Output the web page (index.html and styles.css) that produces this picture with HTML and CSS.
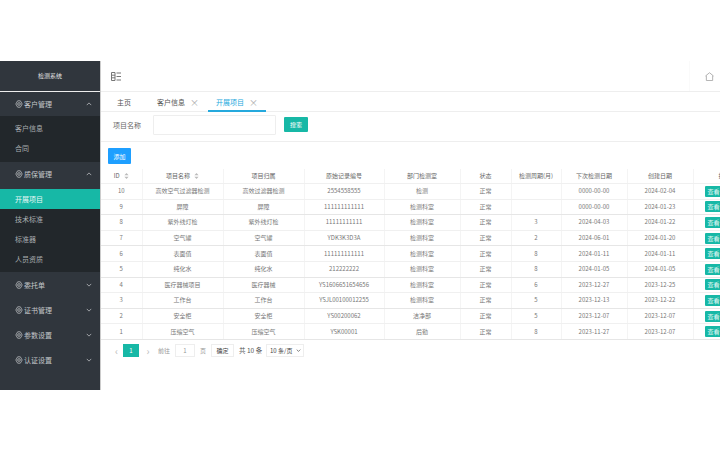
FILE: index.html
```html
<!DOCTYPE html>
<html lang="zh-CN">
<head>
    <meta charset="UTF-8">
    <meta name="viewport" content="width=device-width, initial-scale=1.0">
    <title>检测系统 - 开展项目</title>
    <link rel="stylesheet" href="styles.css">
</head>
<body>
    <svg class="svg-defs" width="0" height="0">
        <symbol id="gear" viewBox="0 0 12 12">
            <path d="M4 1.200h4l2.800 4.800-2.800 4.800H4L1.200 6z" fill="none" stroke="currentColor" stroke-width="1.100"/>
            <circle cx="6" cy="6" r="2" fill="none" stroke="currentColor" stroke-width="1.100"/>
        </symbol>
        <symbol id="up" viewBox="0 0 8 5">
            <path d="M1 4l3-3 3 3" fill="none" stroke="currentColor" stroke-width="1"/>
        </symbol>
        <symbol id="down" viewBox="0 0 8 5">
            <path d="M1 1l3 3 3-3" fill="none" stroke="currentColor" stroke-width="1"/>
        </symbol>
        <symbol id="sort" viewBox="0 0 6 7">
            <path d="M3 0l2.500 2.700h-5zM3 7L.5 4.300h5z" fill="currentColor"/>
        </symbol>
    </svg>

    <div class="app">
        <aside class="sidebar">
            <div class="logo">检测系统</div>
            <div class="menu-title menu-title-first">
                <span><svg class="menu-icon"><use href="#gear"/></svg>客户管理</span>
                <svg class="arrow"><use href="#up"/></svg>
            </div>
            <div class="submenu submenu-short">
                <a>客户信息</a>
                <a>合同</a>
            </div>
            <div class="menu-title menu-title-tall">
                <span><svg class="menu-icon"><use href="#gear"/></svg>质保管理</span>
                <svg class="arrow"><use href="#up"/></svg>
            </div>
            <div class="submenu submenu-long">
                <a class="active">开展项目</a>
                <a>技术标准</a>
                <a>标准器</a>
                <a>人员资质</a>
            </div>
            <div class="menu-title">
                <span><svg class="menu-icon"><use href="#gear"/></svg>委托单</span>
                <svg class="arrow"><use href="#down"/></svg>
            </div>
            <div class="menu-title">
                <span><svg class="menu-icon"><use href="#gear"/></svg>证书管理</span>
                <svg class="arrow"><use href="#down"/></svg>
            </div>
            <div class="menu-title">
                <span><svg class="menu-icon"><use href="#gear"/></svg>参数设置</span>
                <svg class="arrow"><use href="#down"/></svg>
            </div>
            <div class="menu-title">
                <span><svg class="menu-icon"><use href="#gear"/></svg>认证设置</span>
                <svg class="arrow"><use href="#down"/></svg>
            </div>
        </aside>

        <main class="content">
            <div class="topbar">
                <svg class="fold-icon" viewBox="0 0 10 9">
                    <path d="M.5.5h3.500v8H.5zM.5 3.200H4M.5 5.800H4M5.500 1H10M5.500 4.500H10M5.500 8H10" fill="none" stroke="#777" stroke-width="1"/>
                </svg>
                <div class="home-box">
                    <svg class="home-icon" viewBox="0 0 10 10">
                        <path d="M.5 4.500L5 .8l4.500 3.700M1.500 4v5.500h7V4" fill="none" stroke="#aaa" stroke-width="1"/>
                    </svg>
                </div>
            </div>

            <div class="tabs">
                <div class="tab tab-home">主页</div>
                <div class="tab tab-customer">客户信息<span class="tab-close">×</span></div>
                <div class="tab tab-active">开展项目<span class="tab-close">×</span></div>
            </div>

            <form class="search-form">
                <label class="search-label">项目名称</label>
                <input class="search-input" type="text">
                <button type="button" class="btn btn-green">搜索</button>
            </form>

            <div class="toolbar">
                <button type="button" class="btn btn-blue">添加</button>
            </div>

            <div class="table-wrap">
                <table class="data-table">
                    <colgroup>
                        <col class="c-id"><col class="c-name"><col class="c-owner"><col class="c-code">
                        <col class="c-dept"><col class="c-state"><col class="c-cycle"><col class="c-date">
                        <col class="c-date"><col class="c-op">
                    </colgroup>
                    <thead>
                        <tr>
                            <th>ID<svg class="sort"><use href="#sort"/></svg></th>
                            <th>项目名称<svg class="sort"><use href="#sort"/></svg></th>
                            <th>项目归属</th>
                            <th>原始记录编号</th>
                            <th>部门检测室</th>
                            <th>状态</th>
                            <th>检测周期(月)</th>
                            <th>下次检测日期</th>
                            <th>创建日期</th>
                            <th class="op-head">操作</th>
                        </tr>
                    </thead>
                    <tbody id="rows"></tbody>
                </table>
            </div>

            <div class="pager">
                <span class="pager-arrow">‹</span>
                <span class="pager-current">1</span>
                <span class="pager-arrow pager-next">›</span>
                <span class="pager-text">前往</span>
                <span class="pager-input">1</span>
                <span class="pager-text pager-unit">页</span>
                <span class="pager-ok">确定</span>
                <span class="pager-total">共 10 条</span>
                <div class="pager-size-box">
                    <select class="pager-size"><option>10 条/页</option></select>
                    <svg class="pager-size-arrow"><use href="#down"/></svg>
                </div>
            </div>
        </main>
    </div>

    <script src="script.js"></script>
</body>
</html>
```

FILE: styles.css
```css
body {
    margin: 0;
    font-family: "Noto Sans CJK SC", "Liberation Sans", sans-serif;
    font-size: 7px;
    color: #666;
    background-color: #fff;
    overflow: hidden;
}

.svg-defs {
    display: block;
}

.app {
    display: flex;
    height: 329px;
    margin-top: 61px;
}

/* sidebar */
.sidebar {
    flex: 0 0 100px;
    background-color: #30363d;
    border-right: 1px solid #ccc;
    color: #c4c7ca;
    font-size: 7px;
}

.logo {
    height: 30px;
    line-height: 30px;
    text-align: center;
    font-size: 6px;
    color: #e4e4e4;
    border-bottom: 1px solid #eee;
}

.menu-title {
    display: flex;
    justify-content: space-between;
    align-items: center;
    height: 25px;
    padding: 0 8px 0 15px;
}

.menu-title-first {
    height: 24px;
}

.menu-title-tall {
    height: 24px;
    padding-bottom: 3px;
}

.menu-title span {
    display: flex;
    align-items: center;
    gap: 1px;
}

.menu-icon {
    width: 8px;
    height: 8px;
}

.arrow {
    width: 6px;
    height: 4px;
}

.submenu {
    background-color: #22272b;
}

.submenu a {
    display: block;
    height: 20px;
    line-height: 20px;
    padding-left: 15px;
    color: #a9adb0;
}

.submenu-short {
    padding: 2px 0 4px;
}

.submenu-long {
    padding-bottom: 3px;
}

.submenu .active {
    background-color: #17b8a6;
    color: #e8f8f6;
}

/* top bar and tabs */
.content {
    flex: 1;
    min-width: 0;
}

.topbar {
    display: flex;
    justify-content: space-between;
    align-items: center;
    height: 30px;
    padding-left: 10px;
    border-bottom: 1px solid #eee;
}

.fold-icon {
    width: 10px;
    height: 9px;
}

.home-box {
    display: flex;
    align-items: center;
    justify-content: flex-end;
    width: 31px;
    height: 100%;
    padding-right: 6px;
    box-sizing: border-box;
    border-left: 1px solid #fafafa;
}

.home-icon {
    width: 9px;
    height: 9px;
}

.tabs {
    display: flex;
    height: 19px;
    border-bottom: 1px solid #eee;
}

.tab {
    display: flex;
    align-items: center;
    height: 20px;
    color: #555;
}

.tab-home {
    width: 15px;
    padding: 0 15px 0 16px;
}

.tab-customer {
    padding: 0 9px 0 10px;
}

.tab-close {
    margin-left: 5px;
    font-size: 9px;
    color: #aaa;
}

.tab-active {
    padding: 0 8px;
    color: #25a9dd;
    box-shadow: inset 0 -2px 0 #25a9dd;
}

/* search and toolbar */
.search-form {
    display: flex;
    align-items: center;
    height: 30px;
    padding: 0 0 4px 12px;
    box-sizing: border-box;
    border-bottom: 1px solid #eee;
}

.search-label {
    width: 40px;
}

.search-input {
    width: 123px;
    height: 20px;
    padding: 0;
    box-sizing: border-box;
    border: 1px solid #eee;
    border-radius: 1px;
}

.btn {
    width: 24px;
    height: 15px;
    padding: 0;
    border: none;
    border-radius: 1px;
    color: #fff;
    font-family: inherit;
    font-size: 6px;
}

.btn-green {
    margin-left: 8px;
    background-color: #17b8a6;
}

.btn-blue {
    width: 23px;
    height: 16px;
    background-color: #1e9fff;
}

.toolbar {
    display: flex;
    height: 27px;
    padding: 6px 0 0 7px;
    box-sizing: border-box;
}

/* table */
.table-wrap {
    overflow: hidden;
}

.data-table {
    width: 640px;
    table-layout: fixed;
    border-collapse: collapse;
    font-size: 6px;
}

.c-id { width: 41px; }
.c-name { width: 81px; }
.c-owner { width: 81px; }
.c-code { width: 80px; }
.c-dept { width: 76px; }
.c-state { width: 51px; }
.c-cycle { width: 50px; }
.c-date { width: 66px; }
.c-op { width: 48px; }

.data-table th,
.data-table td {
    padding: 0;
    height: 14.6px;
    line-height: 10px;
    text-align: center;
    white-space: nowrap;
    border-bottom: 1px solid #f0f0f0;
    border-right: 1px solid #f4f4f4;
    color: #777;
    font-weight: normal;
    overflow: hidden;
}

.data-table th {
    height: 14px;
    color: #666;
}

.data-table .op-head {
    text-align: left;
    padding-left: 25px;
}

.data-table tr:nth-child(even) td {
    border-bottom-color: #e6e6e6;
}

.sort {
    width: 5px;
    height: 6px;
    margin-left: 4px;
    vertical-align: -1px;
    color: #bbb;
}

.data-table .op-cell {
    text-align: left;
    padding-left: 11px;
}

.view-btn {
    display: block;
    width: 18px;
    height: 11px;
    line-height: 11px;
    text-align: center;
    background-color: #17b8a6;
    color: #e8f8f6;
    border-radius: 1px;
}

/* pagination */
.pager {
    display: flex;
    align-items: center;
    height: 13px;
    margin-top: 4px;
    padding-left: 9px;
    font-size: 6px;
    color: #999;
}

.pager-arrow {
    width: 13px;
    text-align: center;
    font-size: 10px;
    color: #bbb;
}

.pager-next {
    width: 18px;
}

.pager-current {
    width: 16px;
    height: 13px;
    line-height: 13px;
    text-align: center;
    background-color: #17b8a6;
    color: #fff;
}

.pager-text {
    margin: 0 5px 0 1px;
}

.pager-unit {
    margin: 0 5px;
}

.pager-input {
    width: 20px;
    height: 13px;
    line-height: 12px;
    text-align: center;
    border: 1px solid #eee;
    box-sizing: border-box;
}

.pager-ok {
    width: 23px;
    height: 13px;
    line-height: 12px;
    text-align: center;
    color: #444;
    border: 1px solid #eee;
    box-sizing: border-box;
}

.pager-total {
    width: 23px;
    margin: 0 4px 0 5px;
    font-size: 6.500px;
    white-space: nowrap;
    color: #555;
}

.pager-size-box {
    position: relative;
    width: 38px;
    height: 13px;
}

.pager-size {
    display: block;
    width: 100%;
    height: 100%;
    padding: 0 0 0 3px;
    font-size: 6px;
    font-family: inherit;
    color: #444;
    background-color: #fff;
    border: 1px solid #eee;
    border-radius: 0;
    appearance: none;
}

.pager-size-arrow {
    position: absolute;
    top: 5px;
    right: 3px;
    width: 5px;
    height: 3px;
    color: #333;
}
```

FILE: script.js
```js
// table data for the project list
const projects = [
    [10, '高效空气过滤器检测', '高效过滤器检测', '2554558555', '检测', '正常', '', '0000-00-00', '2024-02-04'],
    [9, '屏障', '屏障', '111111111111', '检测科室', '正常', '', '0000-00-00', '2024-01-23'],
    [8, '紫外线灯检', '紫外线灯检', '11111111111', '检测科室', '正常', '3', '2024-04-03', '2024-01-22'],
    [7, '空气罐', '空气罐', 'YDK3K3D3A', '检测科室', '正常', '2', '2024-06-01', '2024-01-20'],
    [6, '表面值', '表面值', '111111111111', '检测科室', '正常', '8', '2024-01-11', '2024-01-11'],
    [5, '纯化水', '纯化水', '212222222', '检测科室', '正常', '8', '2024-01-05', '2024-01-05'],
    [4, '医疗器械项目', '医疗器械', 'YS1606651654656', '检测科室', '正常', '6', '2023-12-27', '2023-12-25'],
    [3, '工作台', '工作台', 'YSJL00100012255', '检测科室', '正常', '5', '2023-12-13', '2023-12-22'],
    [2, '安全柜', '安全柜', 'YS00200062', '洁净部', '正常', '5', '2023-12-07', '2023-12-07'],
    [1, '压缩空气', '压缩空气', 'YSK00001', '后勤', '正常', '8', '2023-11-27', '2023-12-07']
];

const rows = document.getElementById('rows');

projects.forEach(project => {
    const tr = document.createElement('tr');
    tr.innerHTML = project.map(value => `<td>${value}</td>`).join('') +
        '<td class="op-cell"><span class="view-btn">查看</span></td>';
    rows.appendChild(tr);
});
```
